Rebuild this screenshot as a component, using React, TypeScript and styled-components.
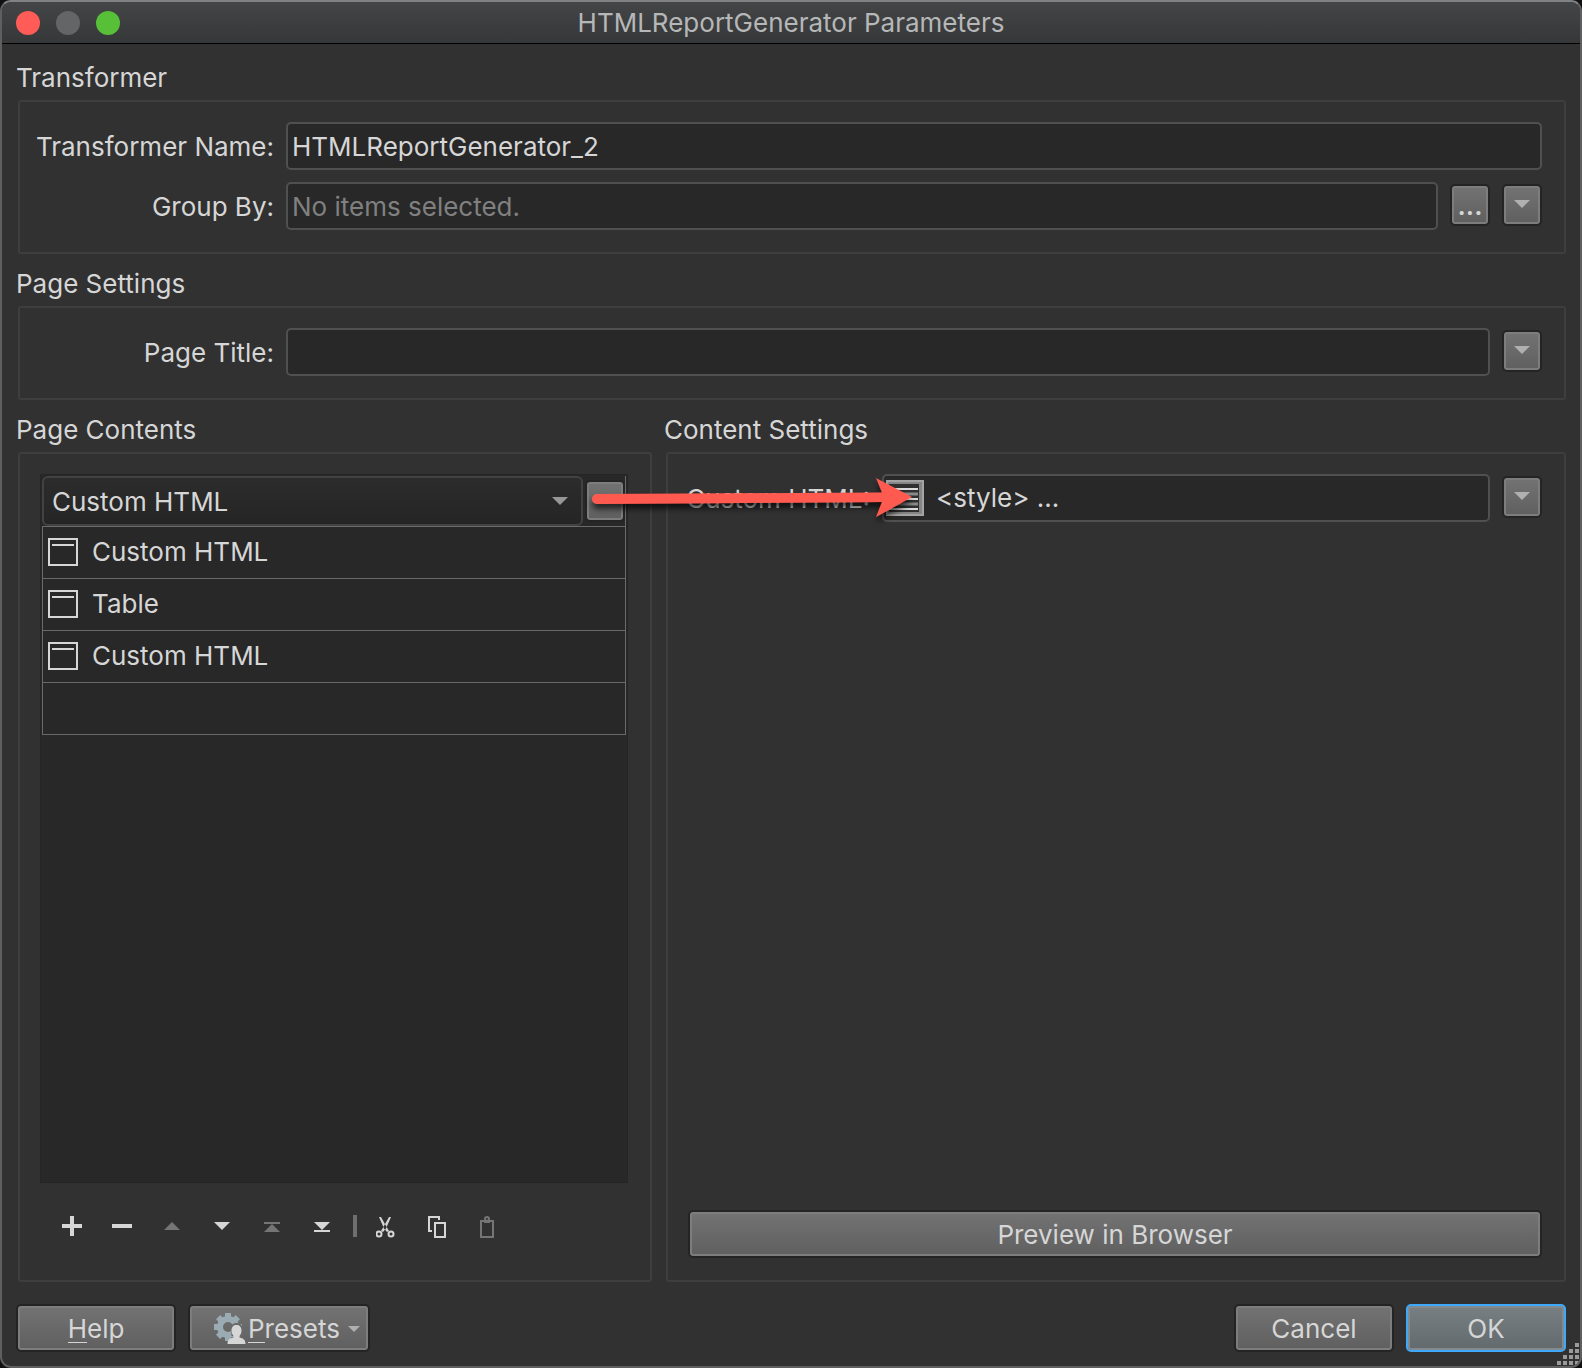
import React from "react";
import styled, { createGlobalStyle, css } from "styled-components";

const GlobalStyle = createGlobalStyle`
  *, *::before, *::after { box-sizing: border-box; }
  body {
    margin: 0;
    background: #111111;
    color: #d6d6d6;
    font-family: Inter, "Liberation Sans", sans-serif;
    font-size: 26px;
    line-height: 32px;
  }
  button, input, select { font: inherit; color: inherit; }
`;

const Dialog = styled.main`
  position: relative;
  display: flex;
  flex-direction: column;
  min-height: 100vh;
  background: #313131;
  border: 2px solid #5f5f5f;
  border-top-color: #818284;
  border-radius: 11px;
  overflow: hidden;
`;

const TitleBar = styled.header`
  display: grid;
  grid-template-columns: 1fr auto 1fr;
  align-items: center;
  height: 42px;
  padding: 0 14px;
  background: linear-gradient(#444546, #363738);
  border-bottom: 1px solid #000000;
`;

const Lights = styled.div`
  display: flex;
  gap: 16px;
`;

const Light = styled.button<{ $color: string }>`
  width: 24px;
  height: 24px;
  padding: 0;
  border: 0;
  border-radius: 50%;
  background: ${(p) => p.$color};
`;

const Title = styled.h1`
  margin: 0;
  font-size: 26px;
  font-weight: 400;
  color: #b6b7b8;
`;

const Body = styled.div`
  flex: 1;
  display: flex;
  flex-direction: column;
  padding: 4px 14px 14px;
`;

const Section = styled.section`
  display: flex;
  flex-direction: column;
  min-width: 0;
`;

const Heading = styled.h2`
  margin: 0;
  padding: 14px 0 6px;
  font-size: 26px;
  font-weight: 400;
`;

const Panel = styled.div`
  flex: 1;
  display: flex;
  flex-direction: column;
  gap: 12px;
  margin-left: 2px;
  padding: 20px 22px 22px 20px;
  border: 2px solid #3e3e3e;
  border-radius: 3px;
`;

const ListPanel = styled(Panel)`
  gap: 20px;
`;

const Columns = styled.div`
  position: relative;
  flex: 1;
  display: grid;
  grid-template-columns: 636fr 902fr;
  gap: 12px;
`;

const Field = styled.div<{ $label: number }>`
  display: grid;
  grid-template-columns: ${(p) => p.$label}px 1fr;
  align-items: center;
  gap: 12px;
`;

const Label = styled.label`
  justify-self: end;
  padding-top: 2px;
  white-space: nowrap;
`;

const Controls = styled.div`
  display: flex;
  align-items: center;
  gap: 12px;
`;

const box = css`
  height: 48px;
  background: #282828;
  border: 2px solid #505050;
  border-radius: 5px;
`;

const TextInput = styled.input`
  ${box}
  flex: 1;
  min-width: 0;
  padding: 0 4px;
  outline: 0;
  &::placeholder { color: #808080; opacity: 1; }
`;

const EditorBox = styled.div`
  ${box}
  flex: 1;
  display: flex;
  align-items: center;
  gap: 12px;
  padding: 0 2px;
`;

const EditorButton = styled.button`
  display: flex;
  padding: 0;
  border: 0;
  background: none;
`;

const EditorInput = styled.input`
  flex: 1;
  min-width: 0;
  padding: 0;
  border: 0;
  background: none;
  outline: 0;
`;

const raised = css`
  border: 2px solid #242424;
  border-radius: 5px;
  background: linear-gradient(#737373, #5f5f5f);
  box-shadow: inset 0 0 0 2px #7d7d7d;
`;

const PushButton = styled.button<{ $width?: number; $primary?: boolean }>`
  ${raised}
  display: flex;
  align-items: center;
  justify-content: center;
  width: ${(p) => (p.$width ? `${p.$width}px` : "auto")};
  height: 48px;
  padding: 2px 0 0;
  ${(p) =>
    p.$primary &&
    css`
      border-color: #3fa9f9;
      background: linear-gradient(#788084, #626a6e);
      box-shadow: inset 0 0 0 2px #828a8e;
    `}
`;

const MenuButton = styled(PushButton)`
  padding-left: 16px;
`;

const SquareButton = styled.button`
  ${raised}
  display: flex;
  align-items: center;
  justify-content: center;
  width: 40px;
  height: 42px;
  padding: 0 0 2px;
  margin-bottom: 2px;
`;

const DotsButton = styled(SquareButton)`
  padding: 2px 0 0;
  font-weight: 600;
`;

const EditContentButton = styled(SquareButton)`
  margin-bottom: 0;
`;

const ListArea = styled.div`
  flex: 1;
  padding: 1px;
  background: #282828;
  border: 1px solid #252525;
`;

const ComboRow = styled.div`
  display: flex;
  align-items: center;
  gap: 2px;
  height: 50px;
  border-right: 1px solid #6a6a6a;
`;

const ComboWrap = styled.div`
  position: relative;
  flex: 1;
`;

const Combo = styled.select`
  appearance: none;
  width: 100%;
  height: 50px;
  padding: 2px 8px 0;
  display: block;
  background: linear-gradient(#2c2c2c, #252525);
  border: 2px solid #424242;
  border-radius: 6px;
  outline: 0;
`;

const ComboArrow = styled.svg`
  position: absolute;
  right: 15px;
  top: 21px;
  pointer-events: none;
`;

const Items = styled.ul`
  margin: 0;
  padding: 0;
  list-style: none;
  border: 1px solid #6a6a6a;
`;

const Item = styled.li`
  display: flex;
  align-items: center;
  gap: 14px;
  height: 51px;
  padding: 0 0 2px 5px;
  & + & {
    height: 52px;
    border-top: 1px solid #6a6a6a;
  }
`;

const Toolbar = styled.div`
  display: flex;
  align-items: center;
  height: 46px;
  margin-bottom: 9px;
  padding-left: 7px;
`;

const ToolButton = styled.button`
  display: flex;
  align-items: center;
  justify-content: center;
  width: 50px;
  height: 46px;
  padding: 0;
  border: 0;
  background: none;
  color: #d6d6d6;
  &:disabled { color: #757575; }
`;

const Divider = styled.span`
  width: 4px;
  height: 22px;
  margin: 0 5px 0 6px;
  background: #6f6f6f;
`;

const Spacer = styled.div`
  flex: 1;
`;

const Footer = styled.footer`
  display: flex;
  gap: 12px;
  padding-top: 22px;
`;

const Mnemonic = styled.span`
  border-bottom: 1px solid #d6d6d6;
  line-height: 26px;
  display: inline-block;
`;

const PresetsLabel = styled.span`
  margin: 0 8px 0 2px;
`;

const Callout = styled.svg`
  position: absolute;
  left: 568px;
  top: 68px;
  pointer-events: none;
`;

const Grip = styled.svg`
  position: absolute;
  right: 0;
  bottom: 0;
`;

function DownArrow({ width = 16, fill = "#b0b0b0" }: { width?: number; fill?: string }) {
  return (
    <svg width={width} height={width / 2} viewBox="0 0 16 8" aria-hidden="true">
      <path d="M0 0H16L8 8Z" fill={fill} />
    </svg>
  );
}

function WindowIcon() {
  return (
    <svg width="30" height="28" aria-hidden="true">
      <rect x="1" y="1" width="28" height="26" fill="none" stroke="#d6d6d6" strokeWidth="2" />
      <path d="M4 7H26" stroke="#d6d6d6" strokeWidth="2" />
    </svg>
  );
}

function EditorIcon() {
  return (
    <svg width="38" height="36" aria-hidden="true">
      <rect width="38" height="36" fill="#a4a4a4" />
      <rect x="2" y="2" width="34" height="32" fill="#858585" />
      <rect x="3" y="4" width="30" height="28" fill="#303030" />
      <path d="M3 9H32M3 19H32M3 29H32" stroke="#dadada" strokeWidth="2" />
      <path d="M3 14H32M3 24H32" stroke="#8a8a8a" strokeWidth="3" />
    </svg>
  );
}

function PresetsIcon() {
  const teeth = [0, 45, 90, 135, 180, 225, 270, 315];
  return (
    <svg width="32" height="32" viewBox="0 0 32 32" aria-hidden="true">
      <g fill="#9babb3">
        {teeth.map((a) => (
          <path key={a} d="M11 0H17V6H11Z" transform={`rotate(${a} 14 14)`} />
        ))}
      </g>
      <circle cx="14" cy="14" r="8" fill="none" stroke="#9babb3" strokeWidth="6" />
      <path d="M17 16c0-4 2-6 5.500-6s6 2 6 6v7h-11Z" fill="#696969" />
      <path
        d="M22.500 12c3 0 5 2 5 5.500 0 2.500-1 4-2 5.500v1.500c3 .8 6 1.500 6 6.500H13.500c0-5 3-5.700 6-6.500V23c-1-1.500-2-3-2-5.500 0-3.500 2-5.500 5-5.500Z"
        fill="#d6d6d6"
      />
    </svg>
  );
}

const tools = [
  { name: "Add", art: <path d="M9 3h4v8h8v4h-8v8H9v-8H1v-4h8Z" /> },
  { name: "Remove", art: <path d="M1 11H21V15H1Z" /> },
  { name: "Move up", disabled: true, art: <path d="M3 17L11 9L19 17Z" /> },
  { name: "Move down", art: <path d="M3 9H19L11 17Z" /> },
  { name: "Move to top", disabled: true, art: <path d="M3 9h16v2H3ZM3 19L11 11L19 19Z" /> },
  { name: "Move to bottom", art: <path d="M3 9H19L11 17ZM3 17h16v2H3Z" /> },
];

const clipboardTools = [
  {
    name: "Cut",
    art: (
      <g>
        <path d="M3 4L5 4L9.500 12L13 18L11 19L8 15.500ZM15 4L13 4L8.500 12L5 18L7 19L10 15.500Z" />
        <circle cx="3" cy="21" r="2.500" fill="none" stroke="currentColor" strokeWidth="2" />
        <circle cx="15" cy="21" r="2.500" fill="none" stroke="currentColor" strokeWidth="2" />
      </g>
    ),
  },
  {
    name: "Copy",
    art: (
      <g fill="none" stroke="currentColor" strokeWidth="2">
        <path d="M6 18H3V4H13V7" />
        <path d="M9 10H19V24H9Z" />
      </g>
    ),
  },
  {
    name: "Paste",
    disabled: true,
    art: (
      <g fill="none" stroke="currentColor" strokeWidth="2">
        <path d="M5 8H17V24H5Z" />
        <path d="M8 9H14" />
        <circle cx="11" cy="6" r="2" />
      </g>
    ),
  },
];

function Tool({ name, disabled, art }: { name: string; disabled?: boolean; art: React.ReactNode }) {
  return (
    <ToolButton aria-label={name} disabled={disabled}>
      <svg width="22" height="26" fill="currentColor" aria-hidden="true">
        {art}
      </svg>
    </ToolButton>
  );
}

function OptionsButton({ label }: { label: string }) {
  return (
    <SquareButton aria-label={label}>
      <DownArrow />
    </SquareButton>
  );
}

const contents = ["Custom HTML", "Table", "Custom HTML"];

export default function App() {
  return (
    <>
      <GlobalStyle />
      <Dialog>
        <TitleBar>
          <Lights>
            <Light $color="#ff5c57" aria-label="Close" />
            <Light $color="#646567" aria-label="Minimize" />
            <Light $color="#57c038" aria-label="Zoom" />
          </Lights>
          <Title>HTMLReportGenerator Parameters</Title>
        </TitleBar>
        <Body>
          <Section>
            <Heading>Transformer</Heading>
            <Panel>
              <Field $label={234}>
                <Label htmlFor="name">Transformer Name:</Label>
                <Controls>
                  <TextInput id="name" defaultValue="HTMLReportGenerator_2" />
                </Controls>
              </Field>
              <Field $label={234}>
                <Label htmlFor="group">Group By:</Label>
                <Controls>
                  <TextInput id="group" placeholder="No items selected." />
                  <DotsButton aria-label="Select items">...</DotsButton>
                  <OptionsButton label="Group By options" />
                </Controls>
              </Field>
            </Panel>
          </Section>
          <Section>
            <Heading>Page Settings</Heading>
            <Panel>
              <Field $label={234}>
                <Label htmlFor="page-title">Page Title:</Label>
                <Controls>
                  <TextInput id="page-title" />
                  <OptionsButton label="Page Title options" />
                </Controls>
              </Field>
            </Panel>
          </Section>
          <Columns>
            <Section>
              <Heading>Page Contents</Heading>
              <ListPanel>
                <ListArea>
                  <ComboRow>
                    <ComboWrap>
                      <Combo aria-label="Content type" defaultValue="Custom HTML">
                        <option>Custom HTML</option>
                        <option>Table</option>
                      </Combo>
                      <ComboArrow width="16" height="8" aria-hidden="true">
                        <path d="M0 0H16L8 8Z" fill="#979797" />
                      </ComboArrow>
                    </ComboWrap>
                    <EditContentButton aria-label="Edit content" />
                  </ComboRow>
                  <Items>
                    {contents.map((text, i) => (
                      <Item key={i}>
                        <WindowIcon />
                        {text}
                      </Item>
                    ))}
                    <Item />
                  </Items>
                </ListArea>
                <Toolbar>
                  {tools.map((t) => (
                    <Tool key={t.name} {...t} />
                  ))}
                  <Divider />
                  {clipboardTools.map((t) => (
                    <Tool key={t.name} {...t} />
                  ))}
                </Toolbar>
              </ListPanel>
            </Section>
            <Section>
              <Heading>Content Settings</Heading>
              <Panel>
                <Field $label={182}>
                  <Label htmlFor="html">Custom HTML:</Label>
                  <Controls>
                    <EditorBox>
                      <EditorButton aria-label="Open text editor">
                        <EditorIcon />
                      </EditorButton>
                      <EditorInput id="html" defaultValue="<style> ..." />
                    </EditorBox>
                    <OptionsButton label="Custom HTML options" />
                  </Controls>
                </Field>
                <Spacer />
                <PushButton>Preview in Browser</PushButton>
              </Panel>
            </Section>
            <Callout width="344" height="64" aria-hidden="true">
              <defs>
                <filter id="drop" x="-10%" y="-30%" width="120%" height="180%">
                  <feDropShadow dx="0" dy="5" stdDeviation="3" floodColor="#000000" floodOpacity="0.7" />
                </filter>
              </defs>
              <path
                d="M13 26L298 24.500L292 10L328 29L292 49L298 34L13 36A5 5 0 0 1 13 26Z"
                fill="#ff5a50"
                filter="url(#drop)"
              />
            </Callout>
          </Columns>
          <Footer>
            <PushButton $width={160}>
              <Mnemonic>H</Mnemonic>elp
            </PushButton>
            <MenuButton $width={182}>
              <PresetsIcon />
              <PresetsLabel>
                <Mnemonic>P</Mnemonic>resets
              </PresetsLabel>
              <DownArrow width={12} />
            </MenuButton>
            <Spacer />
            <PushButton $width={160}>Cancel</PushButton>
            <PushButton $width={160} $primary>
              OK
            </PushButton>
          </Footer>
        </Body>
        <Grip width="24" height="24" fill="#9a9a9a" aria-hidden="true">
          {[0, 1, 2, 3].map((row) =>
            [0, 1, 2, 3]
              .filter((col) => col + row >= 3)
              .map((col) => <rect key={`${row}-${col}`} x={col * 6 + 1} y={row * 6 + 1} width="4" height="4" />)
          )}
        </Grip>
      </Dialog>
    </>
  );
}
